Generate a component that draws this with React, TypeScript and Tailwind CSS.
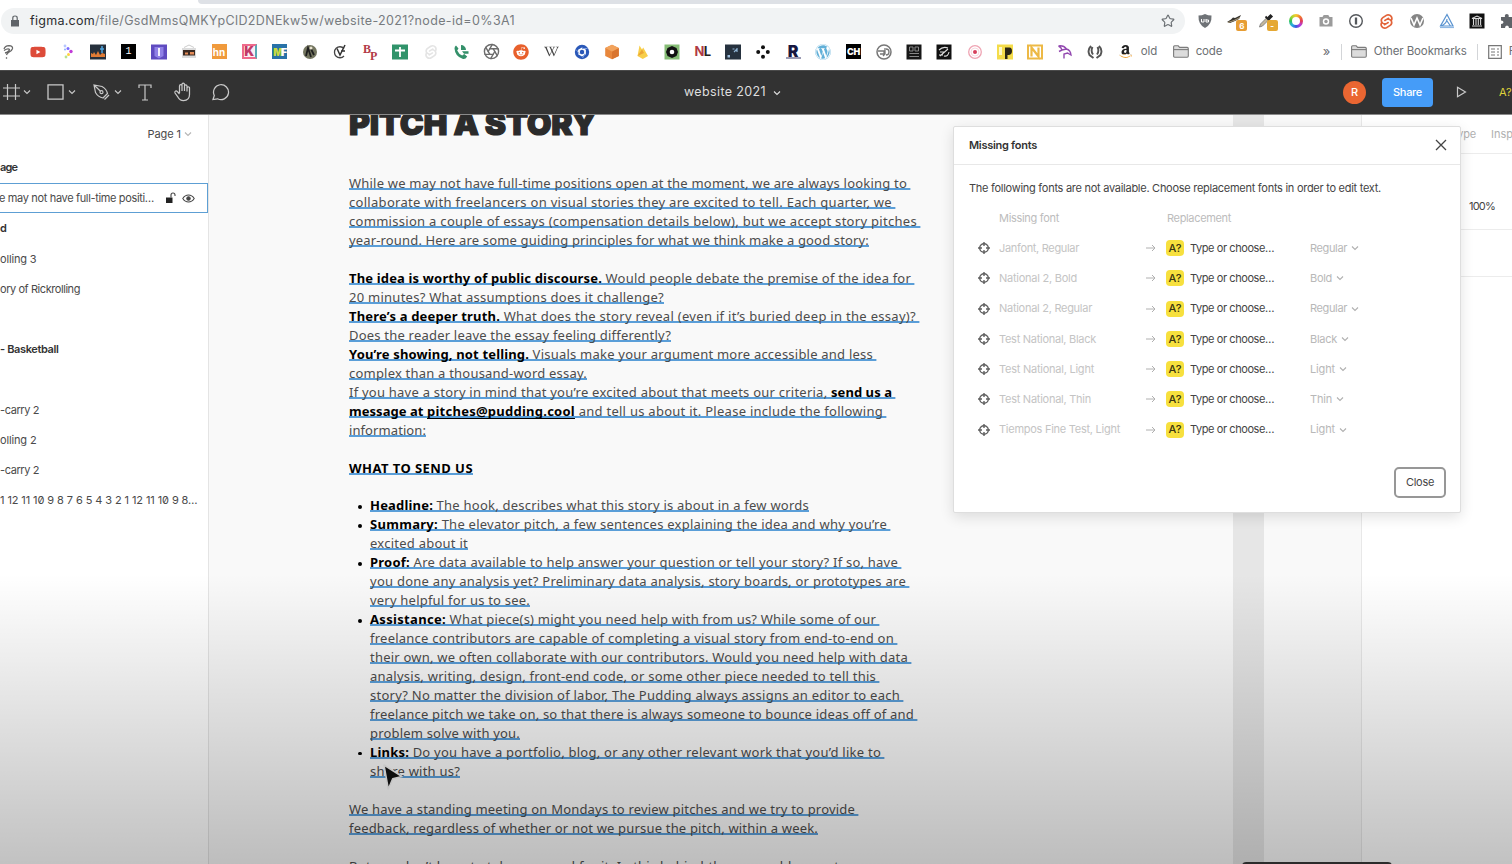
import { useLayoutEffect, useRef, type ReactNode } from 'react';
import { FaYoutube, FaReddit, FaWordpress, FaAmazon, FaWikipediaW } from 'react-icons/fa';
import { SiSvelte } from 'react-icons/si';
import { Aperture, Star } from 'lucide-react';

/** A run of text tracked so that it fills exactly `w` pixels. */
function Fit({ w, children, className = '' }: { w: number; children: string; className?: string }) {
  const ref = useRef<HTMLSpanElement>(null);
  useLayoutEffect(() => {
    const el = ref.current;
    if (!el) return;
    el.style.letterSpacing = '0px';
    const natural = el.getBoundingClientRect().width;
    el.style.letterSpacing = `${(w - natural) / children.length}px`;
  }, [w, children]);
  return (
    <span ref={ref} className={`whitespace-pre ${className}`}>
      {children}
    </span>
  );
}

function Chevron({ className = '' }: { className?: string }) {
  return (
    <svg className={`shrink-0 ${className}`} width="8" height="6" viewBox="0 0 8 6" fill="none" stroke="currentColor" strokeWidth="1.1">
      <path d="M1 1.500l3 3 3-3" />
    </svg>
  );
}

function Folder() {
  return (
    <svg className="shrink-0" width="16" height="13" viewBox="0 0 16 13" fill="#dcdcdc" stroke="#7c7c7c" strokeWidth="1.1">
      <path d="M.6 11V1.800Q.6.8 1.600.8h3.600L6.600 2.400h7.600q1.100 0 1.100 1V11q0 1.200-1.100 1.200H1.700Q.6 12.200.6 11z" />
      <path d="M.6 4.600h14.700" />
    </svg>
  );
}

function Glyph({ children }: { children: ReactNode }) {
  return (
    <svg width="16" height="16" viewBox="0 0 16 16" fill="none">
      {children}
    </svg>
  );
}

function Tile({ className, children }: { className: string; children?: ReactNode }) {
  return (
    <span className={`flex h-[15px] w-[15px] items-center justify-center overflow-hidden leading-none ${className}`}>{children}</span>
  );
}

const bookmarks: ReactNode[] = [
  <Glyph><path d="M4 5q1-3 5-3.300 4 .2 3.500 3Q12 7 8.500 8.500 7 9.500 6.500 11M4 6.500Q8 4 9.500 5.500 9 8 5 9M6 14.500l1-1" stroke="#666" strokeWidth="1.300" /></Glyph>,
  <FaYoutube className="text-[#dd4b39]" size={16} />,
  <Glyph>
    <circle cx="5" cy="2" r="1.400" fill="#b6c6ff" /><circle cx="8" cy="4.500" r="1.500" fill="#7b6cff" />
    <circle cx="11" cy="7.500" r="1.700" fill="#c13bd8" /><circle cx="8.500" cy="10.500" r="1.500" fill="#ffd23e" />
    <circle cx="6" cy="13" r="1.400" fill="#b9e48b" /><circle cx="5" cy="5.500" r="1" fill="#8fb0ff" />
  </Glyph>,
  <Glyph><path d="M0 .5h16v15H0z" fill="#26303c" /><path d="M1 13V9l2 1 1-2 2 3 2-4 2 4 2-2 3 1v3z" fill="#e07b35" /><path d="M12 2v7M10 5h4" stroke="#4fa5e0" strokeWidth="1.500" /></Glyph>,
  <Tile className="bg-black font-mono text-[10px] text-white">1</Tile>,
  <Glyph><path d="M0 .5h16v15H0z" fill="#5f4bc0" /><path d="M3.500 3h9v9l-4.500 2.500L3.500 12z" fill="#8f80e6" /><path d="M8 4v8" stroke="#f1eeff" strokeWidth="2" /></Glyph>,
  <Glyph><path d="M3 3.500l5-2.500 5 2.500" stroke="#ccc" /><path d="M1 4h14v10H1z" fill="#dcdcdc" /><path d="M2 6h12v5.500H2z" fill="#3b2a22" /><path d="M4 8.500h3v2H4zM9 8h4v2.500H9z" fill="#e58b57" /></Glyph>,
  <Tile className="bg-[#f09a3c] text-[10px] font-bold text-white">hn</Tile>,
  <Tile className="border-2 border-[#ef6a8b] border-r-[#58a8b5] bg-[#fbeef2] text-[13px] font-black text-[#c13a68]">K</Tile>,
  <Tile className="bg-[#2872a8] text-[10px] font-black tracking-[-1.500px] text-white"><span className="text-[#c8dc3c]">M</span>F</Tile>,
  <Glyph><circle cx="8" cy="8" r="7" fill="#73755f" /><path d="M4 12l2-8 3 9M9 5l3 6" stroke="#1f1f1f" strokeWidth="1.800" /><circle cx="9" cy="4" r="1.500" fill="#e8e3cf" /></Glyph>,
  <Glyph><path d="M12 4.500A5.500 5.500 0 1 0 12 12" stroke="#444" strokeWidth="1.300" /><path d="M5 4.500l3 6.500 5-10M9 7h4" stroke="#333" strokeWidth="1.500" /></Glyph>,
  <span className="flex items-center leading-none font-['Liberation_Serif',serif] text-[12px] font-bold text-[#b23a48]"><span className="-mt-1.5">B</span><span className="-ml-px mt-2">P</span></span>,
  <Glyph><path d="M0 .5h16v15H0z" fill="#30936a" /><path d="M3 6.500h10M8 3v10" stroke="#fff" strokeWidth="1.800" /></Glyph>,
  <SiSvelte className="text-[#e4e4e4]" size={14} />,
  <Glyph><path d="M3 1.500l2.500 3-1.300 2q1.500 3.500 5 5l2-1.500 3 2.500Q12.500 15.500 10 15 2 12.500 1.500 4.500 1.500 2.500 3 1.500z" fill="#34906a" /><path d="M8 6V1A5 5 0 0 1 13 6zM9 7.200h6.500v2.600H11z" fill="#34906a" /></Glyph>,
  <Aperture className="text-[#6c6c6c]" size={17} strokeWidth={2} />,
  <FaReddit className="text-[#e8602c]" size={16} />,
  <FaWikipediaW className="text-[#444]" size={15} />,
  <Glyph><circle cx="8" cy="8" r="7.200" fill="#2a58b8" /><path d="M8 4.500l3 1.700v3.600L8 11.500 5 9.800V6.200z" stroke="#fff" strokeWidth="1.800" /><path d="M8 4.500h5.500M5 9.800l-2.500-4M11 9.800L8.500 14" stroke="#7f9fe0" strokeWidth="1" /></Glyph>,
  <Glyph><path d="M8 .8l6.800 3.200v8L8 15.200 1.200 12V4z" fill="#e8873c" /><path d="M8 7.500v7.700L14.800 12V4z" fill="#d9752f" /><path d="M8 .8l6.800 3.200L8 7.500 1.200 4z" fill="#f2a35c" /></Glyph>,
  <Glyph><path d="M3.500 12L5.500 1.500l2.500 4 1.200-2L14 12l-5.200 3z" fill="#f8ce4a" /><path d="M3.500 12L8 5.500 10 9z" fill="#eba536" /></Glyph>,
  <Glyph><path d="M.5.5h15v15H.5z" fill="#86bd76" /><path d="M8 2l4.500 2 1.500 4-1.500 4L8 14l-4.500-2L2 8l1.500-4z" fill="#111" /><circle cx="8" cy="8" r="2.300" fill="#fff" /></Glyph>,
  <span className="text-[13px] font-bold leading-none tracking-[-0.500px] text-[#222]"><span className="text-[#b03a45]">N</span>L</span>,
  <Glyph><path d="M0 .5h16v15H0z" fill="#26323f" /><path d="M2.500 11h2.500v2.500H2.500z" fill="#9dbddb" /><path d="M7.500 5h2M9 8l3.500-3.500M12 8V4" stroke="#8fb4d4" strokeWidth="1.200" /></Glyph>,
  <Glyph><circle cx="8" cy="3.200" r="2" fill="#111" /><circle cx="8" cy="12.800" r="2" fill="#111" /><circle cx="3.200" cy="8" r="2" fill="#111" /><circle cx="12.800" cy="8" r="2" fill="#111" /></Glyph>,
  <Tile className="border-b-2 border-[#9b9bb4] text-[16px] font-black text-[#17173f]">R</Tile>,
  <FaWordpress className="text-[#62b0d8]" size={16} />,
  <Tile className="bg-black text-[9px] font-black text-white">CH</Tile>,
  <Glyph><circle cx="8" cy="8" r="7" stroke="#777" strokeWidth="1.500" /><path d="M2 7h6v3H4M9 4v6l-2 2M10 5q3 0 3 3t-3 3" stroke="#777" strokeWidth="1.300" /></Glyph>,
  <Glyph><path d="M.5.5h15v15H.5z" fill="#171717" /><path d="M3.500 3h3.500v4H3.500zM9 3h3.500v4H9zM3.500 9.500H13M3.500 12.500H13" stroke="#888" /></Glyph>,
  <Glyph><path d="M.5.5h15v15H.5z" fill="#111" /><path d="M3 6q4-4 9-2M4 12l8-7M4 8h4M8 12q4 1 5-4M3 11h4" stroke="#ddd" strokeWidth="1.100" /></Glyph>,
  <Glyph><circle cx="8" cy="8" r="6.300" stroke="#efa4b3" strokeWidth="1.300" /><circle cx="8" cy="8" r="4" stroke="#f7d8de" /><circle cx="8" cy="8" r="2" fill="#d6405c" /></Glyph>,
  <Glyph><path d="M0 .5h16v15H0z" fill="#f4dc4a" /><path d="M2 3h3v8H2z" fill="#fff9c9" /><path d="M8 3.500h4.500q2.500 0 2.500 3.500t-3 4h-1.500V15H8z" fill="#2b2616" /></Glyph>,
  <Glyph><path d="M1 1.500h14v13H1z" fill="#fff" stroke="#edb945" strokeWidth="2" /><path d="M4.500 12.500v-9l7 9v-9" stroke="#edb945" strokeWidth="2.200" /></Glyph>,
  <Glyph><path d="M1.500 2q5-1 8 3 4 1 4.500 6l-3.500-2L7 10v4.500M1.500 2q3 1.500 3.500 4L2 7.500M5 6l4.500-1" stroke="#9349b0" strokeWidth="1.400" /></Glyph>,
  <Glyph><path d="M4 2Q0 6 2.500 11l4 3M5.500 3q-2 4 .5 7.500M12 2q4 4 1.500 9l-4 3M10.500 3q2 4-.5 7.500" stroke="#555" strokeWidth="1.900" /></Glyph>,
  <span className="relative flex text-[#222]"><FaAmazon size={15} className="[clip-path:inset(0_0_30%_0)]" /><FaAmazon size={15} className="absolute inset-0 text-[#f0a63c] [clip-path:inset(70%_0_0_0)]" /></span>,
];

const extensions: ReactNode[] = [
  <Glyph><path d="M8 1q3 1.500 6.500 1.500Q15 11.500 8 15 1 11.500 1.500 2.500 5 2.500 8 1z" fill="#6f7377" /><path d="M4.500 6v3h2.500V6M9 6v3h2.500V7H9" stroke="#fff" /></Glyph>,
  <span className="relative"><Glyph><path d="M0 9l4-2.500 2-2 2 .500 6-3-2 4-4 2-5 2z" fill="#34322c" /><path d="M1 9.500l6-2 6-3" stroke="#a8987a" /></Glyph><span className="absolute top-[7px] left-[9px] flex h-[11px] w-[11px] items-center justify-center rounded-[2px] bg-[#e79d33] text-[8px] font-bold text-white">6</span></span>,
  <span className="relative"><Glyph><path d="M1.500 14l1-3 6-6 2 2-6 6z" fill="#c4b79a" stroke="#888" /><path d="M7.500 3.500l4.500 4.500" stroke="#222" strokeWidth="1.800" /><path d="M10 4.500l2.500-2.500 1.500 1.500L11.500 6z" fill="#222" stroke="#222" strokeWidth="1.500" /></Glyph><span className="absolute top-[7px] left-[9px] flex h-[11px] w-[11px] items-center justify-center rounded-[2px] bg-[#e5a833] text-[8px] font-bold text-white">-</span></span>,
  <span className="h-[14px] w-[14px] rounded-full bg-[conic-gradient(#f7c82e,#f07b2e,#e23b5a,#b13be0,#3d57e0,#27b0e0,#2fc45b,#a5d62f,#f7c82e)] p-[3px]"><span className="block h-full w-full rounded-full bg-white" /></span>,
  <Glyph><path d="M1.500 4h3l1.200-2h4.600l1.200 2h3v9.500h-13z" fill="#9b9b9b" /><circle cx="8" cy="8.500" r="3.200" fill="#fff" /><circle cx="8" cy="8.500" r="1.700" fill="#9b9b9b" /></Glyph>,
  <Glyph><circle cx="8" cy="8" r="6.300" stroke="#55585c" strokeWidth="1.400" /><path d="M8 4.500v7" stroke="#55585c" strokeWidth="2.300" /></Glyph>,
  <SiSvelte className="text-[#e2643a]" size={15} />,
  <Glyph><circle cx="8" cy="8" r="7" fill="#858585" /><path d="M2 5l3 7 3-7 3 7 3-7" stroke="#fff" strokeWidth="1.600" /></Glyph>,
  <Glyph><path d="M8 1.500L14 13H1.500zM8 6q0 4-5.500 7M8 8l3.500 5" stroke="#5a93d0" strokeWidth="1.200" /><path d="M1 14.500h14" stroke="#8fb8e4" strokeWidth="1.200" /></Glyph>,
  <Glyph><path d="M.5.5h15v15H.5z" fill="#111" /><path d="M3 5.500L8 3l5 2.500zM3 13h10M4.500 6v6M7 6v6M9.300 6v6M11.600 6v6" stroke="#d8d8d8" strokeWidth="1.100" /></Glyph>,
  <Glyph><path d="M1 4h4q-.8-3 1.800-3t1.800 3H13v4q3-.8 3 1.700T13 11.500V15H9q0-2.500-2-2.500T5 15H1v-4q2.500 0 2.500-1.800T1 7.500z" fill="#5f6368" /></Glyph>,
];

function Browser() {
  return (
    <header className="h-[70px] shrink-0 bg-white text-[#6c7074]">
      <div className="ml-[198px] h-1 rounded-bl-md bg-[#dee1e6]" />
      <div className="flex h-[34px] items-center">
        <div className="ml-px flex h-[26px] w-[1184px] shrink-0 items-center rounded-full bg-[#f1f3f4] pr-2.5 pl-[9px]">
          <svg width="10" height="12" viewBox="0 0 10 12" fill="none"><path d="M1 5h8v6.500H1z" fill="#5f6368" /><path d="M2.800 5V3q0-2 2.200-2t2.200 2v2" stroke="#5f6368" strokeWidth="1.200" /></svg>
          <div className="ml-[10px] flex-1 pt-px text-[12.500px] leading-none">
            <Fit w={65} className="text-[#2b2d30]">figma.com</Fit>
            <Fit w={420} className="text-[#777b7f]">/file/GsdMmsQMKYpClD2DNEkw5w/website-2021?node-id=0%3A1</Fit>
          </div>
          <Star size={14} strokeWidth={2} />
        </div>
        <div className="ml-[5px] flex shrink-0">
          {extensions.map((icon, i) => (
            <div key={i} className="flex w-[30.250px] shrink-0 items-center justify-center">{icon}</div>
          ))}
        </div>
      </div>
      <div className="flex h-[27px] items-center text-[11.500px]">
        <div className="-ml-[7.600px] flex shrink-0">
          {bookmarks.map((icon, i) => (
            <div key={i} className="flex h-4 w-[30.230px] shrink-0 items-center justify-center">{icon}</div>
          ))}
        </div>
        <span className="w-8 shrink-0"><Fit w={16.500}>old</Fit></span>
        <Folder />
        <span className="ml-[7px] w-[127px] shrink-0"><Fit w={26.500}>code</Fit></span>
        <span className="w-[18px] shrink-0 text-[13px]">»</span>
        <span className="mr-[9px] h-4 w-px shrink-0 bg-[#d3d5d8]" />
        <Folder />
        <span className="ml-[7px] w-[103px] shrink-0"><Fit w={93}>Other Bookmarks</Fit></span>
        <span className="mr-[10px] h-4 w-px shrink-0 bg-[#d3d5d8]" />
        <svg className="shrink-0" width="14" height="14" viewBox="0 0 14 14" fill="none" stroke="#777" strokeWidth="1.200"><path d="M.7.7h12.600v12.600H.7z" /><path d="M3 4h4M3 7h4M3 10h4M9 4h2M9 7h2M9 10h2" /></svg>
        <span className="ml-[7px] shrink-0">R</span>
      </div>
    </header>
  );
}

function Toolbar() {
  return (
    <div className="relative z-10 flex h-[45px] shrink-0 items-center border-t border-b border-t-[#4a4a4a] border-b-[#8a8a8a] bg-[#323232] pb-px text-[#c9c9c9]">
      <div className="flex w-[684px] shrink-0 items-center">
        <svg className="ml-[3px]" width="17" height="16" viewBox="0 0 17 16" fill="none" stroke="currentColor" strokeWidth="1.200"><path d="M4.500 0v16M12.500 0v16M0 4h17M0 12h17" /></svg>
        <Chevron className="ml-[3px]" />
        <svg className="ml-[16px]" width="17" height="16" viewBox="0 0 17 16" fill="none" stroke="currentColor" strokeWidth="1.300"><path d="M1 .8h15v14.400H1z" /></svg>
        <Chevron className="ml-[4px]" />
        <svg className="ml-[17px]" width="17" height="16" viewBox="0 0 17 16" fill="none" stroke="currentColor" strokeWidth="1.200"><path d="M1 1l1.500 7.500Q5 13 10 14L14.500 9.500Q13.500 5 9 2.500zM1 1l6.500 6.200" /><circle cx="8.500" cy="8.200" r="1.500" /><path d="M11.500 15.500L16 11" /></svg>
        <Chevron className="ml-[4px]" />
        <svg className="ml-[16px]" width="14" height="17" viewBox="0 0 14 17" fill="none" stroke="currentColor" strokeWidth="1.200"><path d="M1 4V1h12v3M7 1v15M4 16h6" /></svg>
        <svg className="ml-[21px]" width="19" height="20" viewBox="0 0 19 20" fill="none" stroke="currentColor" strokeWidth="1.250" strokeLinejoin="round"><path d="M6.500 11V4q0-1.300 1.300-1.300T9 4V2.300Q9 1 10.200 1t1.300 1.300V4q0-1.200 1.200-1.200T14 4v2q0-1.200 1.300-1.200T16.500 6v6.500q0 6-6 6-3.800 0-5.500-3.300L2 11q-.6-1.400.6-2 1-.3 1.800.6l2.100 2.400M9 4v5M11.500 4v5M14 6v3.500" /></svg>
        <svg className="ml-[20px]" width="18" height="18" viewBox="0 0 18 18" fill="none" stroke="currentColor" strokeWidth="1.250"><path d="M1 16.500l1.300-4A7.500 7.500 0 1 1 5.500 15.800L1 16.500z" /></svg>
      </div>
      <div className="flex flex-1 items-center pt-px text-[12.500px] text-[#dedede]">
        <Fit w={82}>website 2021</Fit>
        <Chevron className="ml-[7px]" />
      </div>
      <div className="flex shrink-0 items-center">
        <span className="flex h-[23px] w-[23px] items-center justify-center rounded-full bg-[#ea6632] text-[11px] font-medium text-white">R</span>
        <span className="ml-4 flex h-[29px] w-[51px] items-center justify-center rounded-[4px] bg-[#459cf8] text-[11px] text-white"><Fit w={29} className="font-medium">Share</Fit></span>
        <svg className="ml-[23px]" width="11" height="12" viewBox="0 0 11 12" fill="none" stroke="currentColor" strokeWidth="1.200"><path d="M1.500 1.200L9.500 6l-8 4.800z" /></svg>
        <span className="ml-[32px] w-[13px] overflow-hidden whitespace-nowrap text-[11px] text-[#dfd23a]">A?</span>
      </div>
    </div>
  );
}

const layers: { text: string; w: number; bold?: boolean }[] = [
  { text: 'd', w: 7, bold: true },
  { text: 'olling 3', w: 36.500 },
  { text: 'ory of Rickrolling', w: 80 },
  { text: '', w: 0 },
  { text: '- Basketball', w: 58.500, bold: true },
  { text: '', w: 0 },
  { text: '-carry 2', w: 39 },
  { text: 'olling 2', w: 36.500 },
  { text: '-carry 2', w: 39 },
];

function Layers() {
  return (
    <aside className="flex w-[209px] shrink-0 flex-col border-r border-[#e4e4e4] bg-white text-[11px] text-[#4a4a4a]">
      <div className="flex h-[37px] items-center justify-end pt-px pr-[16px]">
        <Fit w={33.500}>Page 1</Fit>
        <Chevron className="ml-[3px] text-[#b5b5b5]" />
      </div>
      <div className="flex h-[31px] items-center font-semibold text-[#333]"><Fit w={17}>age</Fit></div>
      <div className="flex h-[30px] w-[208px] items-center border border-l-0 border-[#5d9fd4]">
        <Fit w={155} className="-ml-px">e may not have full-time positi…</Fit>
        <svg className="ml-[11px]" width="11" height="12" viewBox="0 0 11 12" fill="none"><path d="M1 5.500h6.500V11H1z" fill="#222" /><path d="M6 5.500V3q0-2 2-2t2 2v1" stroke="#444" strokeWidth="1.100" /></svg>
        <svg className="ml-[6px]" width="13" height="9" viewBox="0 0 13 9" fill="none" stroke="#444" strokeWidth="1.100"><path d="M.8 4.500Q3 1 6.500 1t5.700 3.500Q10 8 6.500 8T.8 4.500z" /><circle cx="6.500" cy="4.500" r="1.700" fill="#444" /></svg>
      </div>
      {layers.map((l, i) => (
        <div key={i} className={`flex h-[30.230px] items-center pt-px ${l.bold ? 'font-semibold text-[#333]' : ''}`}>
          {l.text && <Fit w={l.w}>{l.text}</Fit>}
        </div>
      ))}
      <div className="flex h-[30.270px] items-center">
        <Fit w={197.500} className="slashed-zero">1 12 11 10 9 8 7 6 5 4 3 2 1 12 11 10 9 8…</Fit>
      </div>
    </aside>
  );
}

/** One run on a text line: its words, its width and an optional weight. */
type Run = [string, number, ('b' | 'link')?];
type Line = { runs: Run[]; indent?: boolean; bullet?: boolean; wraps?: boolean; plain?: boolean };

const story: Line[] = [
  { runs: [['While we may not have full-time positions open at the moment, we are always looking to', 558]], wraps: true },
  { runs: [['collaborate with freelancers on visual stories they are excited to tell. Each quarter, we', 543]], wraps: true },
  { runs: [['commission a couple of essays (compensation details below), but we accept story pitches', 568]], wraps: true },
  { runs: [['year-round. Here are some guiding principles for what we think make a good story:', 520]] },
  { runs: [] },
  { runs: [['The idea is worthy of public discourse.', 253, 'b'], [' Would people debate the premise of the idea for', 309]], wraps: true },
  { runs: [['20 minutes? What assumptions does it challenge?', 315]] },
  { runs: [['There’s a deeper truth.', 151, 'b'], [' What does the story reveal (even if it’s buried deep in the essay)?', 416]], wraps: true },
  { runs: [['Does the reader leave the essay feeling differently?', 322]] },
  { runs: [['You’re showing, not telling.', 180, 'b'], [' Visuals make your argument more accessible and less', 344]], wraps: true },
  { runs: [['complex than a thousand-word essay.', 238]] },
  { runs: [['If you have a story in mind that you’re excited about that meets our criteria, ', 482], ['send us a', 61, 'b']], wraps: true },
  { runs: [['message at ', 78, 'b'], ['pitches@pudding.cool', 148, 'link'], [' and tell us about it. Please include the following', 308]], wraps: true },
  { runs: [['information:', 77]] },
  { runs: [] },
  { runs: [['WHAT TO SEND US', 124, 'b']] },
  { runs: [] },
  { runs: [['Headline:', 63, 'b'], [' The hook, describes what this story is about in a few words', 376]], indent: true, bullet: true },
  { runs: [['Summary:', 68, 'b'], [' The elevator pitch, a few sentences explaining the idea and why you’re', 449]], indent: true, bullet: true, wraps: true },
  { runs: [['excited about it', 98]], indent: true },
  { runs: [['Proof:', 40, 'b'], [' Are data available to help answer your question or tell your story? If so, have', 488]], indent: true, bullet: true, wraps: true },
  { runs: [['you done any analysis yet? Preliminary data analysis, story boards, or prototypes are', 536]], indent: true, wraps: true },
  { runs: [['very helpful for us to see.', 160]], indent: true },
  { runs: [['Assistance:', 76, 'b'], [' What piece(s) might you need help with from us? While some of our', 430]], indent: true, bullet: true, wraps: true },
  { runs: [['freelance contributors are capable of completing a visual story from end-to-end on', 524]], indent: true, wraps: true },
  { runs: [['their own, we often collaborate with our contributors. Would you need help with data', 538]], indent: true, wraps: true },
  { runs: [['analysis, writing, design, front-end code, or some other piece needed to tell this', 506]], indent: true, wraps: true },
  { runs: [['story? No matter the division of labor, The Pudding always assigns an editor to each', 530]], indent: true, wraps: true },
  { runs: [['freelance pitch we take on, so that there is always someone to bounce ideas off of and', 544]], indent: true, wraps: true },
  { runs: [['problem solve with you.', 150]], indent: true },
  { runs: [['Links:', 39, 'b'], [' Do you have a portfolio, blog, or any other relevant work that you’d like to', 472]], indent: true, bullet: true, wraps: true },
  { runs: [['share with us?', 90]], indent: true },
  { runs: [] },
  { runs: [['We have a standing meeting on Mondays to review pitches and we try to provide', 506]], wraps: true },
  { runs: [['feedback, regardless of whether or not we pursue the pitch, within a week.', 469]] },
  { runs: [] },
  { runs: [['But you don’t have to take our word for it. In this behind-the-scenes blog post, a', 505]], plain: true },
];

function StoryLine({ line }: { line: Line }) {
  return (
    <div className="flex h-[18.970px] items-center">
      {line.indent && (
        <span className="flex w-[21px] shrink-0 items-center pl-[9px]">
          {line.bullet && <span className="mt-0.5 h-[3.500px] w-[3.500px] rounded-full bg-black" />}
        </span>
      )}
      <p className={`whitespace-pre leading-[18.970px] ${line.plain ? '' : 'underline decoration-[#5a9ed8] decoration-[1.500px] underline-offset-0 [text-decoration-skip-ink:none]'}`}>
        {line.runs.map(([text, w, kind], i) => (
          <Fit
            key={i}
            w={w}
            className={kind === 'b' ? 'font-bold text-black' : kind === 'link' ? 'font-bold text-black underline decoration-black decoration-1 underline-offset-[2px] [text-decoration-skip-ink:none]' : ''}
          >
            {text}
          </Fit>
        ))}
        {line.wraps ? ' ' : ''}
      </p>
    </div>
  );
}

function Canvas() {
  return (
    <main className="flex min-w-0 flex-1 overflow-hidden bg-[#f9f9f9]">
      <div className="w-[1024px] shrink-0 pl-[140px]">
        <h1 className="-mt-[8px] h-[67px] text-[32px] leading-[33px] font-black text-[#2b2b2b] [-webkit-text-stroke:1.200px_#2b2b2b]">
          <Fit w={247}>PITCH A STORY</Fit>
        </h1>
        <div className="font-['Noto_Sans',sans-serif] text-[13px] text-[#4c4c4c]">
          {story.map((line, i) => <StoryLine key={i} line={line} />)}
        </div>
      </div>
      <div className="w-[31px] shrink-0 bg-[#e6e6e6]" />
    </main>
  );
}

function Inspector() {
  return (
    <aside className="w-[151px] shrink-0 overflow-hidden border-l border-[#e8e8e8] bg-white text-[11px]">
      <div className="flex h-[39px] items-center border-b border-[#ececec] pl-[65px] whitespace-nowrap text-[#b0b0b0]">
        <Fit w={49}>Prototype</Fit>
        <span className="ml-[15px]">Inspect</span>
      </div>
      <div className="h-[76px] border-b border-[#ececec] pt-[44px] pl-[107px] text-[#444]"><Fit w={26}>100%</Fit></div>
      <div className="h-[47px] border-b border-[#ececec]" />
    </aside>
  );
}

const fonts: [string, number, string, number][] = [
  ['Janfont, Regular', 80, 'Regular', 37],
  ['National 2, Bold', 78, 'Bold', 22],
  ['National 2, Regular', 93, 'Regular', 37],
  ['Test National, Black', 97, 'Black', 27],
  ['Test National, Light', 95, 'Light', 25],
  ['Test National, Thin', 92, 'Thin', 22],
  ['Tiempos Fine Test, Light', 121, 'Light', 25],
];

function MissingFonts() {
  return (
    <section className="absolute top-[126px] left-[953px] z-20 flex h-[387px] w-[508px] flex-col rounded-[2px] border border-[#dedede] bg-white text-[11px] text-[#444] shadow-[0_4px_14px_rgba(0,0,0,0.12)]">
      <div className="flex h-[38px] shrink-0 items-center justify-between border-b border-[#e8e8e8] pr-[13px] pl-[15px]">
        <Fit w={68} className="font-semibold text-[#333]">Missing fonts</Fit>
        <svg className="mb-px" width="12" height="12" viewBox="0 0 12 12" fill="none" stroke="#444" strokeWidth="1.300"><path d="M1 1l10 10M11 1L1 11" /></svg>
      </div>
      <div className="flex h-[45px] shrink-0 items-center pt-px pl-[15px]"><Fit w={412}>The following fonts are not available. Choose replacement fonts in order to edit text.</Fit></div>
      <div className="flex h-[23px] shrink-0 items-start pl-[45px] text-[#bcbcbc]">
        <span className="w-[168px]"><Fit w={60}>Missing font</Fit></span>
        <Fit w={64}>Replacement</Fit>
      </div>
      {fonts.map(([name, w, style, sw]) => (
        <div key={name} className="flex h-[30.250px] shrink-0 items-center pl-6">
          <svg width="12" height="12" viewBox="0 0 12 12" fill="none" stroke="#606060" strokeWidth="1.400"><circle cx="6" cy="6" r="4.300" /><path d="M6 0v4M6 8v4M0 6h4M8 6h4" /></svg>
          <span className="ml-[9px] w-[147px] text-[#c4c4c4]"><Fit w={w}>{name}</Fit></span>
          <svg width="10" height="8" viewBox="0 0 10 8" fill="none" stroke="#b0b0b0" strokeWidth="1"><path d="M0 4h9M6 1l3 3-3 3" /></svg>
          <span className="ml-[10px] flex h-4 w-[18px] items-center justify-center rounded-[4px] bg-[#f7e03e] text-[#3a3510]"><Fit w={13} className="font-medium">A?</Fit></span>
          <span className="ml-[6px] w-[120px]"><Fit w={84}>Type or choose…</Fit></span>
          <Fit w={sw} className="text-[#b8b8b8]">{style}</Fit>
          <Chevron className="ml-1 text-[#b0b0b0]" />
        </div>
      ))}
      <button className="mt-[22px] mr-[14px] flex h-[31px] w-[52px] shrink-0 items-center justify-center self-end rounded-[5px] border-2 border-[#979797]">
        <Fit w={28}>Close</Fit>
      </button>
    </section>
  );
}

export default function App() {
  return (
    <div className="relative flex h-[864px] w-[1512px] flex-col overflow-hidden bg-white font-[Inter,sans-serif]">
      <Browser />
      <Toolbar />
      <div className="flex min-h-0 flex-1">
        <Layers />
        <Canvas />
        <Inspector />
      </div>
      <MissingFonts />
      <svg className="absolute top-[762px] left-[380px]" width="24" height="30" viewBox="0 0 24 30">
        <path d="M4 3l18 11.500-9.300 2.200L8.300 27z" fill="#111" stroke="#eee" strokeWidth="1.500" strokeLinejoin="round" />
      </svg>
      <div className="pointer-events-none absolute inset-x-0 top-[574px] bottom-0 bg-linear-to-b from-transparent to-black/24" />
      <div className="absolute top-[862px] left-[1242px] h-4 w-[150px] rounded-[4px] bg-[#2b2b2b]" />
    </div>
  );
}
